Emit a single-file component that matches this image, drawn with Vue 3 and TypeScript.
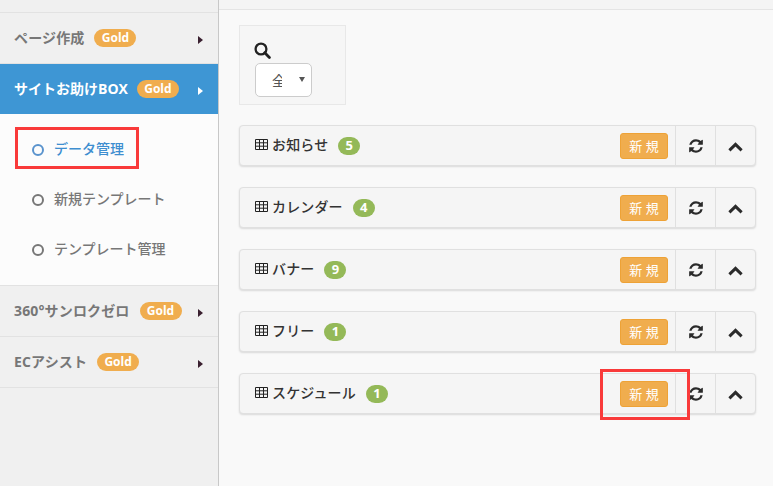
<script setup lang="ts">
const menus = [
  { label: 'ページ作成', active: false },
  { label: 'サイトお助けBOX', active: true },
]
const subs = [
  { label: 'データ管理', active: true },
  { label: '新規テンプレート', active: false },
  { label: 'テンプレート管理', active: false },
]
const lower = ['360°サンロクゼロ', 'ECアシスト']
const panels = [
  { name: 'お知らせ', count: 5 },
  { name: 'カレンダー', count: 4 },
  { name: 'バナー', count: 9 },
  { name: 'フリー', count: 1 },
  { name: 'スケジュール', count: 1 },
]
</script>

<template>
  <div class="page">
    <aside class="side">
      <div class="side-top"></div>
      <a v-for="m in menus" :key="m.label" class="menu" :class="{ on: m.active }">
        <span class="menu-label">{{ m.label }}</span>
        <span class="gold">Gold</span>
        <span class="caret"></span>
      </a>
      <ul class="subs">
        <li v-for="s in subs" :key="s.label" class="sub" :class="{ on: s.active }">
          <span class="dot"></span><span class="sub-label">{{ s.label }}</span>
        </li>
        <li class="mark mark-sub"></li>
      </ul>
      <a v-for="m in lower" :key="m" class="menu">
        <span class="menu-label">{{ m }}</span>
        <span class="gold">Gold</span>
        <span class="caret"></span>
      </a>
    </aside>
    <main class="main">
      <div class="top"></div>
      <div class="content">
        <div class="search">
          <svg class="glass" width="17" height="17" viewBox="0 0 17 17">
            <circle cx="7" cy="7" r="5.4" fill="none" stroke="#222" stroke-width="2.3" />
            <path d="M10.8 10.8 15.4 15.4" stroke="#222" stroke-width="2.8" stroke-linecap="round" />
          </svg>
          <div class="select"><span class="sel-text">全</span><span class="sel-arrow"></span></div>
        </div>
        <section v-for="(p, i) in panels" :key="p.name" class="panel">
          <svg class="tbl" width="13" height="11" viewBox="0 0 13 11">
            <path d="M.5.5h12v10H.5zM.5 3.8h12M.5 7.2h12M4.5.5v10M8.5.5v10" fill="none" stroke="#222" stroke-width="1" />
          </svg>
          <span class="p-name">{{ p.name }}</span>
          <span class="count">{{ p.count }}</span>
          <span class="new-wrap">
            <span class="new">新 規</span>
            <span v-if="i === 4" class="mark mark-new"></span>
          </span>
          <span class="tool">
            <svg width="16" height="16" viewBox="0 0 1792 1792">
              <path fill="#2b2b2b" d="M1639 1056q0 5-1 7-64 268-268 434.500t-478 166.500q-146 0-282.500-55t-243.500-157l-129 129q-19 19-45 19t-45-19-19-45v-448q0-26 19-45t45-19h448q26 0 45 19t19 45-19 45l-137 137q71 66 161 102t187 36q134 0 250-65t186-179q11-17 53-117 8-23 30-23h192q13 0 22.500 9.500t9.500 22.500zm25-800v448q0 26-19 45t-45 19h-448q-26 0-45-19t-19-45 19-45l138-138q-148-137-349-137-134 0-250 65t-186 179q-11 17-53 117-8 23-30 23h-199q-13 0-22.500-9.500t-9.500-22.500v-7q65-268 270-434.500t480-166.500q146 0 284 55.500t245 156.500l130-129q19-19 45-19t45 19 19 45z" />
            </svg>
          </span>
          <span class="tool">
            <svg class="chev" width="15" height="10" viewBox="0 0 15 10">
              <path d="M1.4 8.400 7.500 2.400l6.100 6" fill="none" stroke="#2b2b2b" stroke-width="3" />
            </svg>
          </span>
        </section>
      </div>
    </main>
  </div>
</template>

<style>
html, body { margin: 0; background: #f9f9f9; overflow: hidden; }
</style>

<style scoped>
.page {
  display: flex;
  width: 773px;
  height: 486px;
  overflow: hidden;
  font-family: "Open Sans", "Noto Sans CJK JP", sans-serif;
  font-size: 14px;
  color: #333;
}
.side {
  width: 218px;
  flex: none;
  background: #f0f0f0;
  border-right: 1px solid #c8c8c8;
}
.side-top { height: 12px; border-bottom: 1px solid #e2e2e2; }
.menu {
  display: flex;
  align-items: center;
  height: 50px;
  padding: 0 15px 0 14px;
  border-bottom: 1px solid #e2e2e2;
  color: #777;
  font-weight: 700;
}
.menu.on { background: #3e96d4; color: #fff; border-bottom: 0; }
.menu-label { position: relative; top: -1px; letter-spacing: 0.15px; }
.menu.on .menu-label { letter-spacing: 0; }
.gold {
  box-sizing: border-box;
  width: 42px;
  text-align: center;
  margin-left: 10px;
  height: 18px;
  line-height: 17px;
  border-radius: 9px;
  background: #f0ad4e;
  color: #fff;
  font-size: 12px;
  font-weight: 700;
}
.menu.on .gold { margin-left: 9px; }
.caret {
  margin-left: auto;
  width: 0;
  height: 0;
  border-left: 5px solid #3a2030;
  border-top: 4px solid transparent;
  border-bottom: 4px solid transparent;
  position: relative;
  top: 2px;
}
.menu.on .caret { border-left-color: #fff; }
.subs {
  box-sizing: border-box;
  list-style: none;
  margin: 0;
  padding: 11px 0 10px;
  height: 172px;
  background: #fcfcfc;
  border-bottom: 1px solid #e2e2e2;
  position: relative;
}
.sub {
  display: flex;
  align-items: center;
  height: 50px;
  padding-left: 32px;
  color: #777;
  font-weight: 500;
}
.sub.on { color: #3e8ed0; }
.sub-label { position: relative; top: -2px; }
.dot {
  width: 8px;
  height: 8px;
  border: 2px solid #777;
  border-radius: 50%;
  margin-right: 10px;
}
.sub.on .dot { border-color: #5a93cd; }
.mark { border: 3px solid #f93a3a; box-sizing: border-box; position: absolute; list-style: none; pointer-events: none; }
.mark-sub { left: 15px; top: 13px; width: 124px; height: 42px; }
.main { flex: 1; min-width: 0; }
.top { height: 9px; background: #f4f4f4; border-bottom: 1px solid #e4e4e4; }
.content { padding: 15px 17px 0 20px; }
.search {
  box-sizing: border-box;
  width: 107px;
  height: 80px;
  padding: 17px 15px 0;
  margin-bottom: 20px;
  background: #f6f6f6;
  border: 1px solid #e8e8e8;
}
.glass { display: block; margin: -1px 0 4px -1px; }
.select {
  box-sizing: border-box;
  width: 57px;
  height: 34px;
  background: #fff;
  border: 1px solid #ccc;
  border-radius: 5px;
  display: flex;
  align-items: center;
  position: relative;
  padding-left: 16px;
  font-size: 14px;
  color: #555;
}
.sel-text { display: block; width: 10px; overflow: hidden; }
.sel-arrow {
  position: absolute;
  right: 6px;
  top: 13px;
  width: 0;
  height: 0;
  border-top: 5px solid #555;
  border-left: 3px solid transparent;
  border-right: 3px solid transparent;
}
.panel {
  box-sizing: border-box;
  display: flex;
  align-items: center;
  height: 41px;
  margin-bottom: 21px;
  padding-left: 15px;
  background: #f5f5f5;
  border: 1px solid #e0e0e0;
  border-radius: 4px;
  box-shadow: 0 1px 2px rgba(0, 0, 0, 0.13);
}
.tbl { flex: none; margin-right: 4px; margin-top: -2px; }
.p-name { font-size: 14px; font-weight: 500; color: #333; position: relative; top: -2px; letter-spacing: 0.15px; }
.count {
  margin-left: 10px;
  min-width: 22px;
  height: 18px;
  line-height: 17px;
  text-align: center;
  border-radius: 9px;
  background: #94b958;
  color: #fff;
  font-size: 13px;
  font-weight: 700;
}
.new-wrap { margin-left: auto; margin-right: 7px; position: relative; display: flex; }
.new {
  box-sizing: border-box;
  width: 48px;
  height: 26px;
  line-height: 24px;
  text-align: center;
  background: #f0ad4e;
  border: 1px solid #eea236;
  border-radius: 3px;
  color: #fff;
  font-size: 13px;
}
.mark-new { left: -20px; top: -12px; width: 90px; height: 51px; }
.tool {
  width: 39px;
  height: 39px;
  flex: none;
  display: flex;
  align-items: center;
  justify-content: center;
  border-left: 1px solid #e0e0e0;
}
.chev { margin-top: 2px; }
</style>
